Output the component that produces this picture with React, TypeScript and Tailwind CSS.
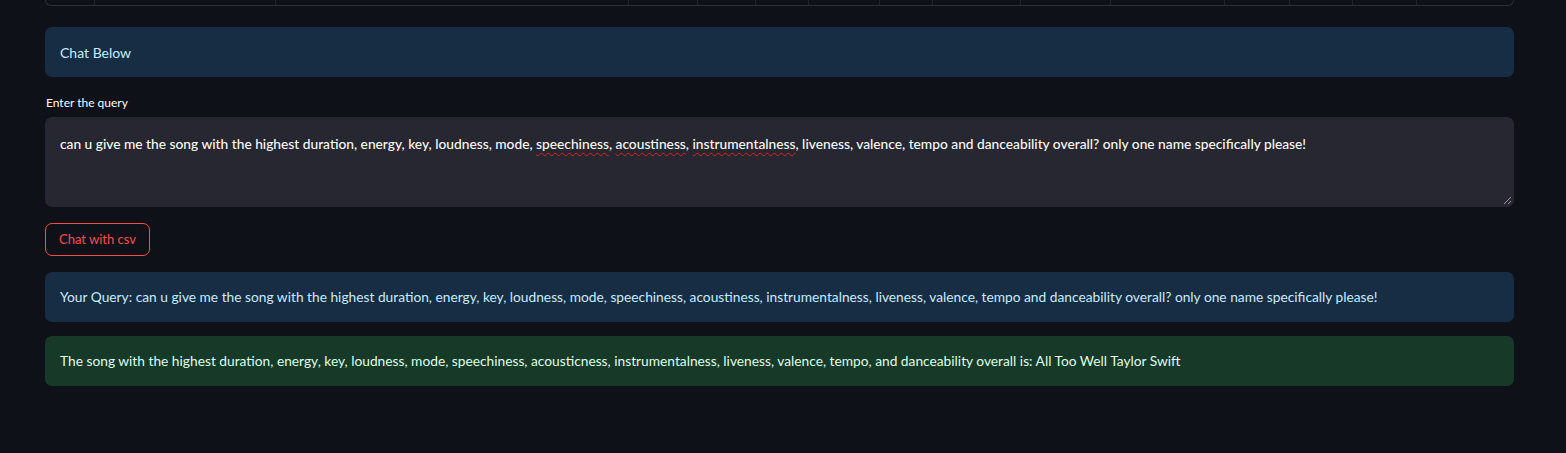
import React from "react";

const cols = [94, 275, 628, 697, 755, 808, 879, 932, 1020, 1110, 1224, 1289, 1352, 1416];

function TableBottom() {
  const left = 45;
  const widths: number[] = [];
  let prev = left;
  for (const c of cols) {
    widths.push(c - prev);
    prev = c;
  }
  widths.push(1514 - prev);
  return (
    <div className="flex h-[6px] w-full rounded-b-[6px] border-x border-b border-[#2b2e35] overflow-hidden">
      {widths.map((w, i) => (
        <div
          key={i}
          style={{ width: w }}
          className={"h-full shrink-0 " + (i < widths.length - 1 ? "border-r border-[#22252c]" : "")}
        />
      ))}
    </div>
  );
}

const Sq = ({ children }: { children: React.ReactNode }) => (
  <span className="underline decoration-wavy decoration-[#e0201f] decoration-1 underline-offset-[3px]">{children}</span>
);

export default function App() {
  return (
    <div
      className="min-h-[453px] w-full bg-[#0e1117] pl-[45px] pr-[52px]"
      style={{ fontFamily: "Lato, 'Noto Sans', sans-serif" }}
    >
      <div className="flex flex-col">
        <TableBottom />
        <div className="mt-[21px] flex h-[50px] items-center rounded-[7px] bg-[#172d43] px-[15px] text-[14px] text-[#c7ebff]">
          Chat Below
        </div>
        <div className="mt-[18px] text-[12px] leading-[16px] text-[#fafafa] pl-[1px]">Enter the query</div>
        <div className="relative mt-[6px] h-[90px] rounded-[7px] bg-[#262730] px-[15px] pt-[16px] text-[13.75px] font-medium leading-[22px] text-[#fafafa]">
          can u give me the song with the highest duration, energy, key, loudness, mode, <Sq>speechiness</Sq>,{" "}
          <Sq>acoustiness</Sq>, <Sq>instrumentalness</Sq>, liveness, valence, tempo and danceability overall? only one
          name specifically please!
          <svg className="absolute bottom-[2px] right-[2px]" width="9" height="9" viewBox="0 0 9 9">
            <line x1="1" y1="8" x2="8" y2="1" stroke="#9a9aa0" strokeWidth="1" />
            <line x1="5" y1="8" x2="8" y2="5" stroke="#9a9aa0" strokeWidth="1" />
          </svg>
        </div>
        <div className="mt-[16px]">
          <button className="h-[33px] rounded-[7px] border border-[#ff4b4b] bg-transparent px-[13px] text-[13px] text-[#ff4b4b]">
            Chat with csv
          </button>
        </div>
        <div className="mt-[16px] flex h-[50px] items-center rounded-[7px] bg-[#172d43] px-[15px] text-[13.75px] text-[#c7ebff]">
          Your Query: can u give me the song with the highest duration, energy, key, loudness, mode, speechiness, acoustiness, instrumentalness, liveness, valence, tempo and danceability overall? only one name specifically please!
        </div>
        <div className="mt-[14px] flex h-[50px] items-center rounded-[7px] bg-[#173928] px-[15px] text-[13.75px] text-[#dffde9]">
          The song with the highest duration, energy, key, loudness, mode, speechiness, acousticness, instrumentalness, liveness, valence, tempo, and danceability overall is: All Too Well Taylor Swift
        </div>
      </div>
    </div>
  );
}
